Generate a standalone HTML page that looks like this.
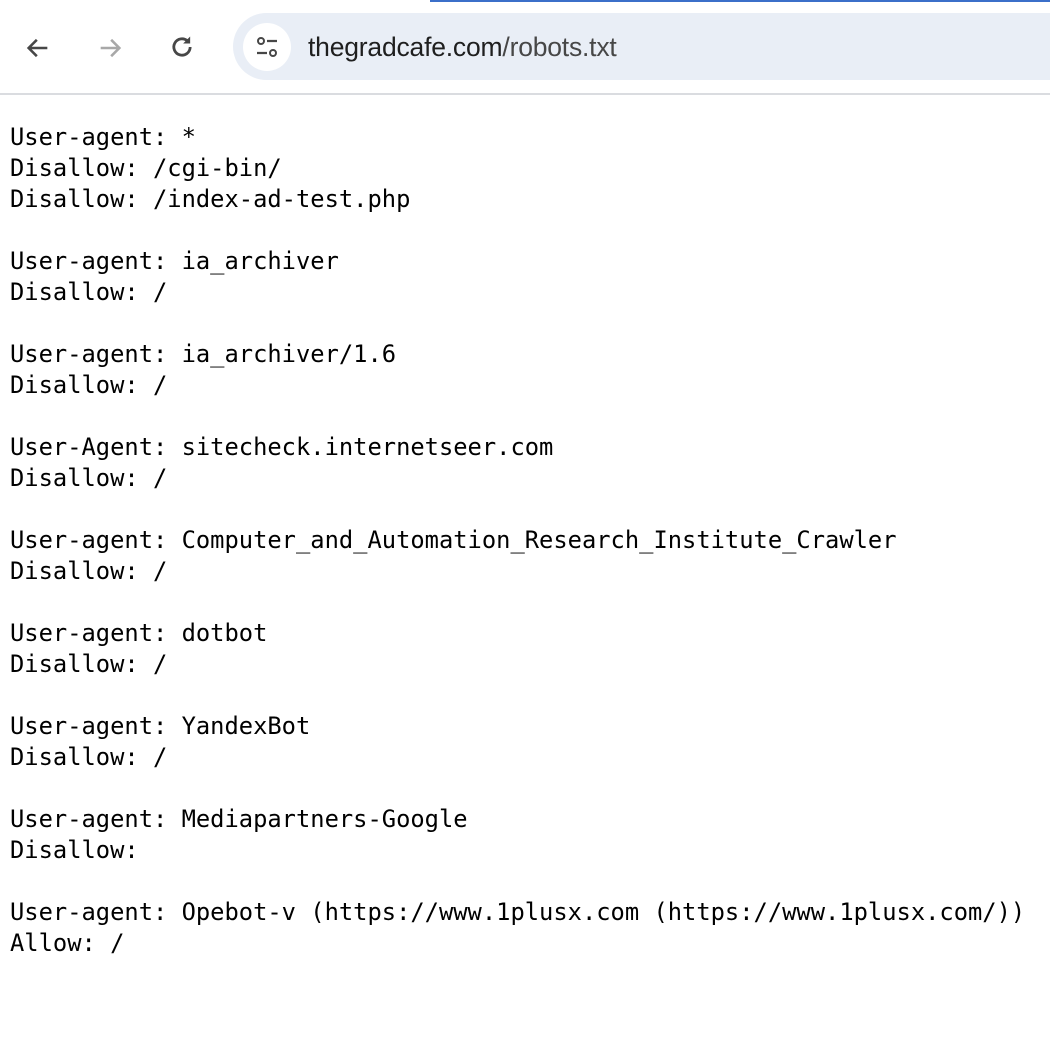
<!DOCTYPE html>
<html><head><style>
html,body{margin:0;padding:0;background:#fff;width:1050px;height:1037px;overflow:hidden}
.bar{position:absolute;left:0;top:0;width:1050px;height:93px;background:#fff;border-bottom:2px solid #dadce0}
.topline{position:absolute;left:430px;top:0;width:620px;height:2px;background:#3b6fc9}
.omni{position:absolute;left:233px;top:13px;width:860px;height:67px;border-radius:34px;background:#e9eef6}
.circ{position:absolute;left:243px;top:23px;width:48px;height:48px;border-radius:50%;background:#fff}
.url{position:absolute;left:308px;top:32px;font:26.5px "Liberation Sans",sans-serif;color:#1f1f1f;letter-spacing:-0.2px}
.url span{color:#474747}
pre{position:absolute;left:10px;top:122px;margin:0;font:23.75px/31px "DejaVu Sans Mono",monospace;color:#000}
</style></head><body>
<div class="bar">
<div class="topline"></div>
<svg style="position:absolute;left:24px;top:34px" width="28" height="28" viewBox="0 0 24 24"><path d="M20 12H5M11 5l-7 7 7 7" fill="none" stroke="#474747" stroke-width="2.2"/></svg>
<svg style="position:absolute;left:96px;top:34px" width="28" height="28" viewBox="0 0 24 24"><path d="M4 12h15M13 5l7 7-7 7" fill="none" stroke="#a8a8a8" stroke-width="2.2"/></svg>
<svg style="position:absolute;left:168px;top:33px" width="28" height="28" viewBox="0 0 24 24"><path d="M19 12a7 7 0 1 1-2.1-5" fill="none" stroke="#474747" stroke-width="2.4"/><path d="M19 3v6h-6z" fill="#474747"/></svg>
<div class="omni"></div>
<div class="circ"></div>
<svg style="position:absolute;left:255px;top:35px" width="24" height="24" viewBox="0 0 24 24"><circle cx="6" cy="6" r="3" fill="none" stroke="#474747" stroke-width="2"/><path d="M12 6h10M2 18h10" stroke="#474747" stroke-width="2.2"/><circle cx="18" cy="18" r="3" fill="none" stroke="#474747" stroke-width="2"/></svg>
<div class="url">thegradcafe.com<span>/robots.txt</span></div>
</div>
<pre>User-agent: *
Disallow: /cgi-bin/
Disallow: /index-ad-test.php

User-agent: ia_archiver
Disallow: /

User-agent: ia_archiver/1.6
Disallow: /

User-Agent: sitecheck.internetseer.com
Disallow: /

User-agent: Computer_and_Automation_Research_Institute_Crawler
Disallow: /

User-agent: dotbot
Disallow: /

User-agent: YandexBot
Disallow: /

User-agent: Mediapartners-Google
Disallow:

User-agent: Opebot-v (https://www.1plusx.com (https://www.1plusx.com/))
Allow: /</pre>
</body></html>
